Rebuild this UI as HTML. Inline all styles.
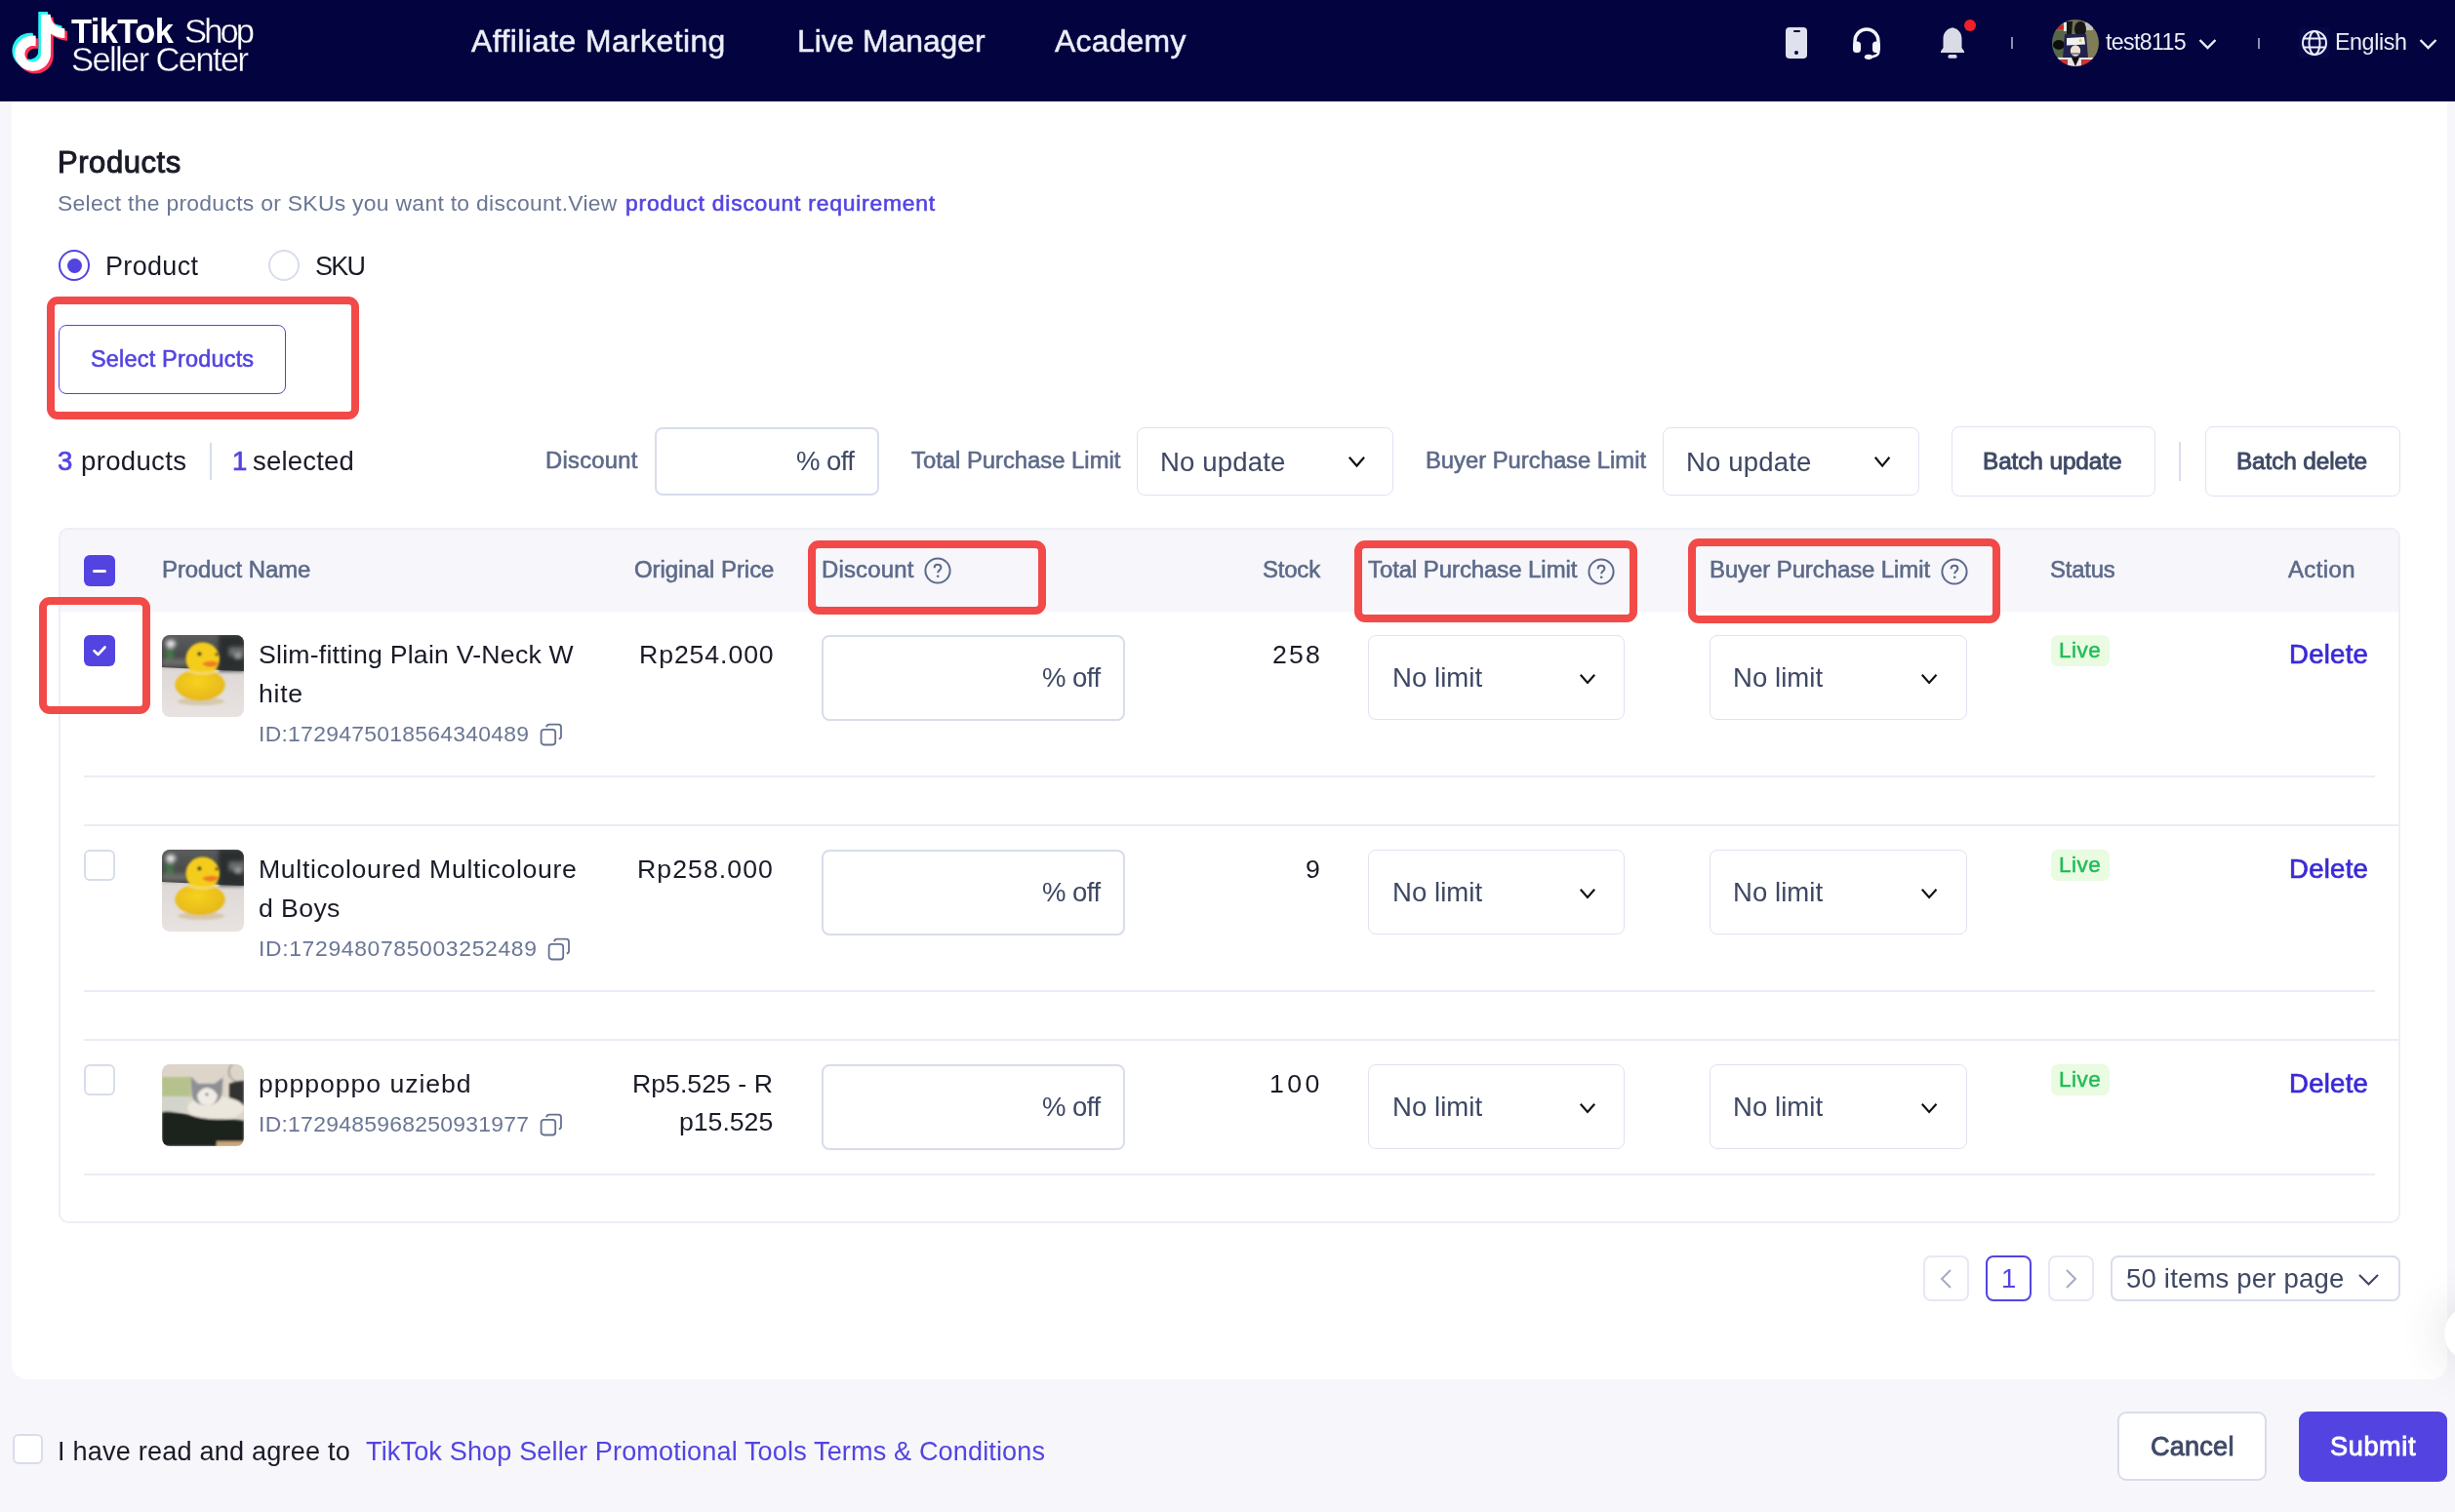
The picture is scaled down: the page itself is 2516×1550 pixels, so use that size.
<!DOCTYPE html><html><head><meta charset="utf-8"><style>
html,body{margin:0;padding:0;width:2516px;height:1550px;overflow:hidden;background:#f7f7fb}
body{position:relative;font-family:"Liberation Sans",sans-serif}
.t{position:absolute;white-space:nowrap;font-family:"Liberation Sans",sans-serif;will-change:transform}
</style></head><body>
<div style="position:absolute;left:0.0px;top:0.0px;width:2516.0px;height:1550.0px;background:#f7f7fb;"></div>
<div style="position:absolute;left:12.0px;top:0.0px;width:2496.0px;height:1414.0px;background:#fff;border-radius:0 0 16px 16px;"></div>
<div style="position:absolute;left:2505px;top:1339px;width:56px;height:56px;border-radius:50%;background:#fff;box-shadow:0 0 40px 10px rgba(60,60,90,0.10);"></div>
<div style="position:absolute;left:0.0px;top:0.0px;width:2516.0px;height:104.0px;background:#03033f;"></div>
<svg style="position:absolute;left:0px;top:0px" width="90" height="90" viewBox="0 0 90 90">
<g transform="translate(8.6,12) scale(2.45,2.42)"><path d="M12.525.02c1.31-.02 2.61-.01 3.91-.02.08 1.53.63 3.09 1.75 4.17 1.12 1.11 2.7 1.62 4.24 1.79v4.03c-1.44-.05-2.89-.35-4.2-.97-.57-.26-1.1-.59-1.62-.93-.01 2.92.01 5.84-.02 8.75-.08 1.4-.54 2.79-1.35 3.94-1.31 1.92-3.58 3.17-5.91 3.21-1.43.08-2.86-.31-4.08-1.03-2.02-1.19-3.44-3.37-3.65-5.71-.02-.5-.03-1-.01-1.49.18-1.9 1.12-3.72 2.58-4.96 1.66-1.44 3.98-2.13 6.15-1.72.02 1.48-.04 2.96-.04 4.44-.99-.32-2.15-.23-3.02.37-.63.41-1.11 1.04-1.36 1.75-.21.51-.15 1.07-.14 1.61.24 1.64 1.82 3.02 3.5 2.87 1.12-.01 2.19-.66 2.77-1.61.19-.33.4-.67.41-1.06.1-1.79.06-3.57.07-5.36.01-4.03-.01-8.05.02-12.07z" fill="#25f4ee"/></g>
<g transform="translate(14.1,17.5) scale(2.45,2.42)"><path d="M12.525.02c1.31-.02 2.61-.01 3.91-.02.08 1.53.63 3.09 1.75 4.17 1.12 1.11 2.7 1.62 4.24 1.79v4.03c-1.44-.05-2.89-.35-4.2-.97-.57-.26-1.1-.59-1.62-.93-.01 2.92.01 5.84-.02 8.75-.08 1.4-.54 2.79-1.35 3.94-1.31 1.92-3.58 3.17-5.91 3.21-1.43.08-2.86-.31-4.08-1.03-2.02-1.19-3.44-3.37-3.65-5.71-.02-.5-.03-1-.01-1.49.18-1.9 1.12-3.72 2.58-4.96 1.66-1.44 3.98-2.13 6.15-1.72.02 1.48-.04 2.96-.04 4.44-.99-.32-2.15-.23-3.02.37-.63.41-1.11 1.04-1.36 1.75-.21.51-.15 1.07-.14 1.61.24 1.64 1.82 3.02 3.5 2.87 1.12-.01 2.19-.66 2.77-1.61.19-.33.4-.67.41-1.06.1-1.79.06-3.57.07-5.36.01-4.03-.01-8.05.02-12.07z" fill="#fe2c55"/></g>
<g transform="translate(11.4,14.8) scale(2.45,2.42)"><path d="M12.525.02c1.31-.02 2.61-.01 3.91-.02.08 1.53.63 3.09 1.75 4.17 1.12 1.11 2.7 1.62 4.24 1.79v4.03c-1.44-.05-2.89-.35-4.2-.97-.57-.26-1.1-.59-1.62-.93-.01 2.92.01 5.84-.02 8.75-.08 1.4-.54 2.79-1.35 3.94-1.31 1.92-3.58 3.17-5.91 3.21-1.43.08-2.86-.31-4.08-1.03-2.02-1.19-3.44-3.37-3.65-5.71-.02-.5-.03-1-.01-1.49.18-1.9 1.12-3.72 2.58-4.96 1.66-1.44 3.98-2.13 6.15-1.72.02 1.48-.04 2.96-.04 4.44-.99-.32-2.15-.23-3.02.37-.63.41-1.11 1.04-1.36 1.75-.21.51-.15 1.07-.14 1.61.24 1.64 1.82 3.02 3.5 2.87 1.12-.01 2.19-.66 2.77-1.61.19-.33.4-.67.41-1.06.1-1.79.06-3.57.07-5.36.01-4.03-.01-8.05.02-12.07z" fill="#fff"/></g>
</svg>
<div class="t" style="left:73.30px;top:15.18px;font-size:34.49px;line-height:34.49px;letter-spacing:-0.627px;color:#fff;font-weight:700;">TikTok</div>
<div class="t" style="left:188.80px;top:15.18px;font-size:34.49px;line-height:34.49px;letter-spacing:-2.847px;color:#fff;font-weight:400;-webkit-text-stroke:0.35px #03033f;">Shop</div>
<div class="t" style="left:73.30px;top:44.48px;font-size:34.49px;line-height:34.49px;letter-spacing:-1.605px;color:#fff;font-weight:400;-webkit-text-stroke:0.35px #03033f;">Seller Center</div>
<div class="t" style="left:483.10px;top:26.60px;font-size:31.88px;line-height:31.88px;letter-spacing:0.420px;color:#eceef8;font-weight:400;-webkit-text-stroke:0.5px #eceef8;">Affiliate Marketing</div>
<div class="t" style="left:817.10px;top:26.80px;font-size:31.88px;line-height:31.88px;letter-spacing:-0.056px;color:#eceef8;font-weight:400;-webkit-text-stroke:0.5px #eceef8;">Live Manager</div>
<div class="t" style="left:1081.10px;top:26.80px;font-size:31.88px;line-height:31.88px;letter-spacing:0.241px;color:#eceef8;font-weight:400;-webkit-text-stroke:0.5px #eceef8;">Academy</div>
<div style="position:absolute;left:1830px;top:28px;width:22px;height:32px;border-radius:4px;background:#dfe2ee;"></div>
<div style="position:absolute;left:1838.0px;top:31.0px;width:6.5px;height:2.0px;background:#03033f;border-radius:1px;"></div>
<div style="position:absolute;left:1839px;top:52px;width:4px;height:4px;border-radius:50%;background:#03033f;"></div>
<svg style="position:absolute;left:1896px;top:27px" width="34" height="36" viewBox="0 0 34 36">
<path d="M5 19 V15 A12 12 0 0 1 29 15 V19" fill="none" stroke="#f3f4fa" stroke-width="3.4"/>
<rect x="3" y="15.5" width="8" height="11.5" rx="3.5" fill="#f3f4fa"/>
<rect x="23" y="15.5" width="8" height="11.5" rx="3.5" fill="#f3f4fa"/>
<path d="M29.5 26 C29 29.5 26 31 21 31.5" fill="none" stroke="#f3f4fa" stroke-width="2.6"/>
<ellipse cx="19" cy="31.3" rx="4.2" ry="2.6" fill="#f3f4fa"/>
</svg>
<svg style="position:absolute;left:1986px;top:27px" width="30" height="34" viewBox="0 0 30 34">
<path d="M15 1.2 C8.5 2.5 5.5 7 5.5 13 V22 L3 25.5 V27 H27 V25.5 L24.5 22 V13 C24.5 7 21.5 2.5 15 1.2Z" fill="#d9dbe6"/>
<rect x="10.5" y="29" width="9" height="3.8" rx="1.5" fill="#d9dbe6"/>
</svg>
<div style="position:absolute;left:2012.8px;top:19.8px;width:12.5px;height:12.5px;border-radius:50%;background:#f0202a;"></div>
<div style="position:absolute;left:2061.0px;top:38.0px;width:2.0px;height:12.0px;background:#8c90ab;"></div>
<svg style="position:absolute;left:2103px;top:20px" width="48" height="48" viewBox="0 0 48 48">
<defs><clipPath id="av"><circle cx="24" cy="24" r="24"/></clipPath><filter id="avb"><feGaussianBlur stdDeviation="0.7"/></filter></defs>
<g clip-path="url(#av)"><g filter="url(#avb)">
<rect width="48" height="48" fill="#6f704f"/>
<rect x="0" y="12" width="14" height="26" fill="#56664a"/>
<rect x="34" y="10" width="14" height="30" fill="#807b58"/>
<rect x="5" y="6" width="7" height="4" fill="#c8262a"/>
<rect x="12" y="3" width="4" height="9" fill="#e6e6e6"/>
<rect x="34" y="3" width="8" height="8" fill="#d8d8d8" opacity="0.8"/>
<path d="M15 2 L21 2 L20 16 L15 16Z" fill="#151515"/>
<ellipse cx="29" cy="10" rx="6" ry="8" fill="#161616"/>
<ellipse cx="7" cy="26" rx="6" ry="5" fill="#111"/>
<path d="M13 15 L35 15 L37 40 L11 40Z" fill="#23214d"/>
<path d="M15 19 L33 18 L34 25.5 L15 26.5Z" fill="#f1f1f1"/>
<circle cx="29" cy="21.5" r="1.5" fill="#e3cf2a"/>
<ellipse cx="24" cy="32" rx="5.2" ry="5.8" fill="#eddfd2"/>
<rect x="20" y="34" width="8" height="2" fill="#8a8a8a"/>
<rect x="0" y="39" width="48" height="10" fill="#e9e2e2"/>
<rect x="4" y="41" width="12" height="8" fill="#c93535"/>
<rect x="30" y="41" width="14" height="8" fill="#c93535"/>
<path d="M20 39 L24 48 L28 39Z" fill="#111"/>
</g></g></svg>
<div class="t" style="left:2158.20px;top:31.89px;font-size:23.19px;line-height:23.19px;letter-spacing:-0.655px;color:#eceef8;font-weight:400;">test8115</div>
<svg style="position:absolute;left:2253px;top:39px" width="19" height="12" viewBox="0 0 19 12"><path d="M1.5 2 L9.5 10 L17.5 2" fill="none" stroke="#eceef8" stroke-width="2.4"/></svg>
<div style="position:absolute;left:2314.0px;top:38.5px;width:2.0px;height:11.5px;background:#8c90ab;"></div>
<div style="position:absolute;left:2356.0px;top:28.0px;width:31.0px;height:31.0px;background:#07074a;border-radius:2px;"></div>
<svg style="position:absolute;left:2357px;top:29px" width="30" height="30" viewBox="0 0 30 30">
<g fill="none" stroke="#eceef8" stroke-width="2">
<circle cx="15" cy="15" r="12"/>
<ellipse cx="15" cy="15" rx="5.5" ry="12"/>
<line x1="3" y1="10.5" x2="27" y2="10.5"/>
<line x1="3" y1="19.5" x2="27" y2="19.5"/>
</g></svg>
<div class="t" style="left:2392.50px;top:31.89px;font-size:23.19px;line-height:23.19px;letter-spacing:-0.376px;color:#eceef8;font-weight:400;">English</div>
<svg style="position:absolute;left:2479px;top:39px" width="19" height="12" viewBox="0 0 19 12"><path d="M1.5 2 L9.5 10 L17.5 2" fill="none" stroke="#eceef8" stroke-width="2.4"/></svg>
<div class="t" style="left:59.20px;top:150.84px;font-size:31.01px;line-height:31.01px;letter-spacing:0.550px;color:#191b27;font-weight:400;-webkit-text-stroke:1.0px #191b27;">Products</div>
<div class="t" style="left:59.20px;top:196.84px;font-size:22.90px;line-height:22.90px;letter-spacing:0.293px;color:#6a7694;font-weight:400;">Select the products or SKUs you want to discount.View</div>
<div class="t" style="left:641.10px;top:196.84px;font-size:22.90px;line-height:22.90px;letter-spacing:0.765px;color:#5344e2;font-weight:400;-webkit-text-stroke:0.6px #5344e2;">product discount requirement</div>
<div style="position:absolute;left:60px;top:256px;width:28px;height:28px;border:2px solid #5344e2;border-radius:50%;"></div>
<div style="position:absolute;left:68.5px;top:264.5px;width:15px;height:15px;border-radius:50%;background:#5344e2;"></div>
<div class="t" style="left:107.80px;top:260.19px;font-size:26.96px;line-height:26.96px;letter-spacing:0.356px;color:#191b27;font-weight:400;">Product</div>
<div style="position:absolute;left:275px;top:256px;width:28px;height:28px;border:2px solid #d8ddec;border-radius:50%;"></div>
<div class="t" style="left:322.80px;top:260.19px;font-size:26.96px;line-height:26.96px;letter-spacing:-1.698px;color:#191b27;font-weight:400;">SKU</div>
<div style="position:absolute;left:60px;top:333.3px;width:231px;height:68.5px;border:1.5px solid #5344e2;border-radius:8px;"></div>
<div class="t" style="left:92.60px;top:356.74px;font-size:23.48px;line-height:23.48px;letter-spacing:0.195px;color:#5344e2;font-weight:400;-webkit-text-stroke:0.6px #5344e2;">Select Products</div>
<div class="t" style="left:59.20px;top:459.09px;font-size:27.54px;line-height:27.54px;letter-spacing:0.000px;color:#5344e2;font-weight:400;-webkit-text-stroke:0.7px #5344e2;">3</div>
<div class="t" style="left:82.60px;top:459.09px;font-size:27.54px;line-height:27.54px;letter-spacing:0.328px;color:#191b27;font-weight:400;">products</div>
<div style="position:absolute;left:215.0px;top:453.5px;width:2.0px;height:38.7px;background:#d8dcef;"></div>
<div class="t" style="left:237.80px;top:459.09px;font-size:27.54px;line-height:27.54px;letter-spacing:0.000px;color:#5344e2;font-weight:400;-webkit-text-stroke:0.7px #5344e2;">1</div>
<div class="t" style="left:258.80px;top:459.09px;font-size:27.54px;line-height:27.54px;letter-spacing:0.175px;color:#191b27;font-weight:400;">selected</div>
<div class="t" style="left:559.00px;top:460.30px;font-size:23.77px;line-height:23.77px;letter-spacing:0.277px;color:#5d6a89;font-weight:400;-webkit-text-stroke:0.6px #5d6a89;">Discount</div>
<div style="position:absolute;left:670.8px;top:437.6px;width:226px;height:66px;border:2px solid #d8ddec;border-radius:8px;"></div>
<div class="t" style="left:816.10px;top:458.89px;font-size:27.54px;line-height:27.54px;letter-spacing:-0.567px;color:#3e4864;font-weight:400;">% off</div>
<div class="t" style="left:934.00px;top:460.30px;font-size:23.77px;line-height:23.77px;letter-spacing:0.019px;color:#5d6a89;font-weight:400;-webkit-text-stroke:0.6px #5d6a89;">Total Purchase Limit</div>
<div style="position:absolute;left:1165.2px;top:437.5px;width:261.0px;height:68.7px;border:1px solid #dfe3f1;border-radius:8px;background:#fff"></div>
<div class="t" style="left:1189.40px;top:460.09px;font-size:27.54px;line-height:27.54px;letter-spacing:0.165px;color:#3e4864;font-weight:400;">No update</div>
<svg style="position:absolute;left:1379.6px;top:466.0px" width="20.9" height="14.4" viewBox="0 0 20.9 14.4"><path d="M2.8 2.8 L10.5 11.6 L18.1 2.8" fill="none" stroke="#111" stroke-width="2.2"/></svg>
<div class="t" style="left:1460.50px;top:460.30px;font-size:23.77px;line-height:23.77px;letter-spacing:0.010px;color:#5d6a89;font-weight:400;-webkit-text-stroke:0.6px #5d6a89;">Buyer Purchase Limit</div>
<div style="position:absolute;left:1704.4px;top:437.5px;width:261.0px;height:68.7px;border:1px solid #dfe3f1;border-radius:8px;background:#fff"></div>
<div class="t" style="left:1727.80px;top:460.09px;font-size:27.54px;line-height:27.54px;letter-spacing:0.165px;color:#3e4864;font-weight:400;">No update</div>
<svg style="position:absolute;left:1918.8px;top:466.0px" width="20.2" height="14.4" viewBox="0 0 20.2 14.4"><path d="M2.8 2.8 L10.1 11.6 L17.4 2.8" fill="none" stroke="#111" stroke-width="2.2"/></svg>
<div style="position:absolute;left:2000px;top:437px;width:206.6px;height:69.6px;border:1px solid #dfe3f1;border-radius:8px;"></div>
<div class="t" style="left:2032.30px;top:460.50px;font-size:24.35px;line-height:24.35px;letter-spacing:-0.094px;color:#3f4a66;font-weight:400;-webkit-text-stroke:0.9px #3f4a66;">Batch update</div>
<div style="position:absolute;left:2233.0px;top:453.0px;width:2.0px;height:39.7px;background:#d8dcef;"></div>
<div style="position:absolute;left:2259.5px;top:437px;width:198.2px;height:69.6px;border:1px solid #dfe3f1;border-radius:8px;"></div>
<div class="t" style="left:2291.50px;top:460.50px;font-size:24.35px;line-height:24.35px;letter-spacing:-0.116px;color:#3f4a66;font-weight:400;-webkit-text-stroke:0.9px #3f4a66;">Batch delete</div>
<div style="position:absolute;left:60px;top:541px;width:2396px;height:709px;border:2px solid #eceff6;border-radius:10px;overflow:hidden"><div style="position:absolute;left:0;top:0;width:100%;height:84px;background:#f6f6fb"></div></div>
<div style="position:absolute;left:86px;top:569px;width:32px;height:32px;border-radius:6px;background:#5344e2"></div>
<div style="position:absolute;left:95.0px;top:583.5px;width:14.0px;height:3.0px;background:#fff;border-radius:1.5px;"></div>
<div class="t" style="left:165.80px;top:572.47px;font-size:23.91px;line-height:23.91px;letter-spacing:-0.037px;color:#5d6a89;font-weight:400;-webkit-text-stroke:0.6px #5d6a89;">Product Name</div>
<div class="t" style="left:649.50px;top:572.47px;font-size:23.91px;line-height:23.91px;letter-spacing:-0.006px;color:#5d6a89;font-weight:400;-webkit-text-stroke:0.6px #5d6a89;">Original Price</div>
<div class="t" style="left:841.70px;top:572.47px;font-size:23.91px;line-height:23.91px;letter-spacing:0.197px;color:#5d6a89;font-weight:400;-webkit-text-stroke:0.6px #5d6a89;">Discount</div>
<div class="t" style="left:1293.80px;top:572.47px;font-size:23.91px;line-height:23.91px;letter-spacing:-0.176px;color:#5d6a89;font-weight:400;-webkit-text-stroke:0.6px #5d6a89;">Stock</div>
<div class="t" style="left:1401.80px;top:572.47px;font-size:23.91px;line-height:23.91px;letter-spacing:-0.044px;color:#5d6a89;font-weight:400;-webkit-text-stroke:0.6px #5d6a89;">Total Purchase Limit</div>
<div class="t" style="left:1751.60px;top:572.47px;font-size:23.91px;line-height:23.91px;letter-spacing:-0.058px;color:#5d6a89;font-weight:400;-webkit-text-stroke:0.6px #5d6a89;">Buyer Purchase Limit</div>
<div class="t" style="left:2101.40px;top:572.47px;font-size:23.91px;line-height:23.91px;letter-spacing:-0.219px;color:#5d6a89;font-weight:400;-webkit-text-stroke:0.6px #5d6a89;">Status</div>
<div class="t" style="left:2345.20px;top:572.47px;font-size:23.91px;line-height:23.91px;letter-spacing:0.404px;color:#5d6a89;font-weight:400;-webkit-text-stroke:0.6px #5d6a89;">Action</div>
<svg style="position:absolute;left:947.0px;top:571.0px" width="28" height="28" viewBox="0 0 28 28"><circle cx="14" cy="14" r="12.6" fill="none" stroke="#5d6a89" stroke-width="2"/><path d="M10.6 11.2 C10.6 8.9 12.1 7.8 14 7.8 C15.9 7.8 17.4 9 17.4 10.9 C17.4 13.3 14.2 13.5 14.2 16.2" fill="none" stroke="#5d6a89" stroke-width="2"/><circle cx="14.2" cy="19.8" r="1.3" fill="#5d6a89"/></svg>
<svg style="position:absolute;left:1627.3px;top:572.2px" width="28" height="28" viewBox="0 0 28 28"><circle cx="14" cy="14" r="12.6" fill="none" stroke="#5d6a89" stroke-width="2"/><path d="M10.6 11.2 C10.6 8.9 12.1 7.8 14 7.8 C15.9 7.8 17.4 9 17.4 10.9 C17.4 13.3 14.2 13.5 14.2 16.2" fill="none" stroke="#5d6a89" stroke-width="2"/><circle cx="14.2" cy="19.8" r="1.3" fill="#5d6a89"/></svg>
<svg style="position:absolute;left:1989.4px;top:572.1px" width="28" height="28" viewBox="0 0 28 28"><circle cx="14" cy="14" r="12.6" fill="none" stroke="#5d6a89" stroke-width="2"/><path d="M10.6 11.2 C10.6 8.9 12.1 7.8 14 7.8 C15.9 7.8 17.4 9 17.4 10.9 C17.4 13.3 14.2 13.5 14.2 16.2" fill="none" stroke="#5d6a89" stroke-width="2"/><circle cx="14.2" cy="19.8" r="1.3" fill="#5d6a89"/></svg>
<div style="position:absolute;left:86px;top:651px;width:32px;height:32px;border-radius:6px;background:#5344e2"></div>
<svg style="position:absolute;left:86px;top:651px" width="32" height="32" viewBox="0 0 32 32"><path d="M10.5 16.2 L14.5 20 L21.5 12.5" fill="none" stroke="#fff" stroke-width="2.6" stroke-linecap="round" stroke-linejoin="round"/></svg>
<div style="position:absolute;left:166px;top:651px;width:84px;height:84px;border-radius:8px;overflow:hidden"><svg width="84" height="84" viewBox="0 0 84 84"><defs><filter id="IDb" x="-10%" y="-10%" width="120%" height="120%"><feGaussianBlur stdDeviation="0.9"/></filter><filter id="IDb2"><feGaussianBlur stdDeviation="2"/></filter>
<linearGradient id="IDt" x1="0" y1="0" x2="0" y2="1"><stop offset="0" stop-color="#d6d2d0"/><stop offset="1" stop-color="#e8e2e0"/></linearGradient>
<linearGradient id="IDk" x1="0" y1="0" x2="0" y2="1"><stop offset="0" stop-color="#5b5c5e"/><stop offset="1" stop-color="#3c3d3e"/></linearGradient>
<radialGradient id="IDy" cx="0.45" cy="0.4" r="0.7"><stop offset="0" stop-color="#f7d21e"/><stop offset="1" stop-color="#e3b318"/></radialGradient></defs>
<rect width="84" height="84" fill="url(#IDt)"/>
<path d="M0 0 H84 V37 L60 36 L0 33Z" fill="url(#IDk)"/>
<g filter="url(#IDb2)">
<ellipse cx="9" cy="9" rx="5" ry="4" fill="#e8e8e8"/>
<ellipse cx="8" cy="19" rx="4" ry="6" fill="#3f7a45"/>
<rect x="0" y="24" width="26" height="8" fill="#6a6c68"/>
<rect x="58" y="0" width="26" height="37" fill="#2c2d2f"/>
<rect x="69" y="13" width="15" height="8" fill="#6e7072"/>
<ellipse cx="78" cy="21.5" rx="3" ry="1.2" fill="#f0f0f0"/>
</g>
<g filter="url(#IDb)">
<ellipse cx="40" cy="68" rx="24" ry="4" fill="#c9b27a" opacity="0.5"/>
<ellipse cx="39" cy="51" rx="25.7" ry="16" fill="url(#IDy)"/>
<ellipse cx="41.7" cy="24.5" rx="17.3" ry="17" fill="#f4cd1c"/>
<path d="M41 29.5 C45 26 54 26 58 28.5 C56 33 48 35 41 29.5Z" fill="#f07a22"/>
<circle cx="38.4" cy="19.4" r="2.1" fill="#3a2a12"/>
<circle cx="56" cy="19.8" r="1.6" fill="#3a2a12"/>
<path d="M27 37 C35 40 48 41 58 36" fill="none" stroke="#f3e6b0" stroke-width="2" opacity="0.6"/>
</g>
</svg></div>
<div class="t" style="left:265.40px;top:657.63px;font-size:26.67px;line-height:26.67px;letter-spacing:0.223px;color:#191b27;font-weight:400;">Slim-fitting Plain V-Neck W</div>
<div class="t" style="left:265.40px;top:697.63px;font-size:26.67px;line-height:26.67px;letter-spacing:0.689px;color:#191b27;font-weight:400;">hite</div>
<div class="t" style="left:265.40px;top:740.84px;font-size:22.90px;line-height:22.90px;letter-spacing:0.284px;color:#6a7694;font-weight:400;">ID:1729475018564340489</div>
<svg style="position:absolute;left:553.2px;top:741.2px" width="24" height="24" viewBox="0 0 24 24"><g fill="none" stroke="#647190" stroke-width="1.8"><rect x="1.6" y="6.9" width="14.6" height="15.6" rx="3"/><path d="M7 4.2 C7.4 2.6 8.4 1.7 10 1.7 H19.3 C20.9 1.7 22 2.8 22 4.4 V13.8 C22 15.4 21.2 16.3 19.8 16.5"/></g></svg>
<div class="t" style="left:654.50px;top:657.63px;font-size:26.67px;line-height:26.67px;letter-spacing:0.908px;color:#191b27;font-weight:400;">Rp254.000</div>
<div style="position:absolute;left:842.3px;top:651px;width:307px;height:83.5px;border:2px solid #d8ddec;border-radius:8px;"></div>
<div class="t" style="left:1068.00px;top:681.19px;font-size:27.54px;line-height:27.54px;letter-spacing:-0.542px;color:#3e4864;font-weight:400;">% off</div>
<div class="t" style="left:1303.80px;top:657.83px;font-size:26.67px;line-height:26.67px;letter-spacing:2.183px;color:#191b27;font-weight:400;">258</div>
<div style="position:absolute;left:1402.3px;top:651.2px;width:261.2px;height:85.3px;border:1px solid #dfe3f1;border-radius:8px;background:#fff"></div>
<div class="t" style="left:1426.60px;top:681.09px;font-size:27.54px;line-height:27.54px;letter-spacing:0.052px;color:#3e4864;font-weight:400;">No limit</div>
<svg style="position:absolute;left:1617.0px;top:688.8px" width="20.0" height="13.7" viewBox="0 0 20.0 13.7"><path d="M2.8 2.8 L10.0 10.9 L17.2 2.8" fill="none" stroke="#111" stroke-width="2.2"/></svg>
<div style="position:absolute;left:1752.4px;top:651.2px;width:261.2px;height:85.3px;border:1px solid #dfe3f1;border-radius:8px;background:#fff"></div>
<div class="t" style="left:1776.40px;top:681.09px;font-size:27.54px;line-height:27.54px;letter-spacing:0.052px;color:#3e4864;font-weight:400;">No limit</div>
<svg style="position:absolute;left:1966.7px;top:688.8px" width="20.3" height="13.7" viewBox="0 0 20.3 13.7"><path d="M2.8 2.8 L10.1 10.9 L17.5 2.8" fill="none" stroke="#111" stroke-width="2.2"/></svg>
<div style="position:absolute;left:2101.8px;top:651px;width:60px;height:32px;border-radius:7px;background:#e9fbe0"></div>
<div class="t" style="left:2109.80px;top:655.78px;font-size:22.61px;line-height:22.61px;letter-spacing:0.438px;color:#20bb5a;font-weight:400;-webkit-text-stroke:0.45px #20bb5a;">Live</div>
<div class="t" style="left:2346.10px;top:657.39px;font-size:27.54px;line-height:27.54px;letter-spacing:0.264px;color:#3a2ad6;font-weight:400;-webkit-text-stroke:0.7px #3a2ad6;">Delete</div>
<div style="position:absolute;left:86.0px;top:795.0px;width:2348.0px;height:2.0px;background:#e9edf5;"></div>
<div style="position:absolute;left:86.0px;top:845.0px;width:2373.0px;height:2.0px;background:#e9edf5;"></div>
<div style="position:absolute;left:86px;top:871px;width:28px;height:28px;border-radius:6px;border:2px solid #d8ddec;background:#fff"></div>
<div style="position:absolute;left:166px;top:871px;width:84px;height:84px;border-radius:8px;overflow:hidden"><svg width="84" height="84" viewBox="0 0 84 84"><defs><filter id="ID2b" x="-10%" y="-10%" width="120%" height="120%"><feGaussianBlur stdDeviation="0.9"/></filter><filter id="ID2b2"><feGaussianBlur stdDeviation="2"/></filter>
<linearGradient id="ID2t" x1="0" y1="0" x2="0" y2="1"><stop offset="0" stop-color="#d6d2d0"/><stop offset="1" stop-color="#e8e2e0"/></linearGradient>
<linearGradient id="ID2k" x1="0" y1="0" x2="0" y2="1"><stop offset="0" stop-color="#5b5c5e"/><stop offset="1" stop-color="#3c3d3e"/></linearGradient>
<radialGradient id="ID2y" cx="0.45" cy="0.4" r="0.7"><stop offset="0" stop-color="#f7d21e"/><stop offset="1" stop-color="#e3b318"/></radialGradient></defs>
<rect width="84" height="84" fill="url(#ID2t)"/>
<path d="M0 0 H84 V37 L60 36 L0 33Z" fill="url(#ID2k)"/>
<g filter="url(#ID2b2)">
<ellipse cx="9" cy="9" rx="5" ry="4" fill="#e8e8e8"/>
<ellipse cx="8" cy="19" rx="4" ry="6" fill="#3f7a45"/>
<rect x="0" y="24" width="26" height="8" fill="#6a6c68"/>
<rect x="58" y="0" width="26" height="37" fill="#2c2d2f"/>
<rect x="69" y="13" width="15" height="8" fill="#6e7072"/>
<ellipse cx="78" cy="21.5" rx="3" ry="1.2" fill="#f0f0f0"/>
</g>
<g filter="url(#ID2b)">
<ellipse cx="40" cy="68" rx="24" ry="4" fill="#c9b27a" opacity="0.5"/>
<ellipse cx="39" cy="51" rx="25.7" ry="16" fill="url(#ID2y)"/>
<ellipse cx="41.7" cy="24.5" rx="17.3" ry="17" fill="#f4cd1c"/>
<path d="M41 29.5 C45 26 54 26 58 28.5 C56 33 48 35 41 29.5Z" fill="#f07a22"/>
<circle cx="38.4" cy="19.4" r="2.1" fill="#3a2a12"/>
<circle cx="56" cy="19.8" r="1.6" fill="#3a2a12"/>
<path d="M27 37 C35 40 48 41 58 36" fill="none" stroke="#f3e6b0" stroke-width="2" opacity="0.6"/>
</g>
</svg></div>
<div class="t" style="left:265.40px;top:877.63px;font-size:26.67px;line-height:26.67px;letter-spacing:0.651px;color:#191b27;font-weight:400;">Multicoloured Multicoloure</div>
<div class="t" style="left:265.40px;top:917.63px;font-size:26.67px;line-height:26.67px;letter-spacing:0.387px;color:#191b27;font-weight:400;">d Boys</div>
<div class="t" style="left:265.40px;top:960.84px;font-size:22.90px;line-height:22.90px;letter-spacing:0.656px;color:#6a7694;font-weight:400;">ID:1729480785003252489</div>
<svg style="position:absolute;left:561.0px;top:961.2px" width="24" height="24" viewBox="0 0 24 24"><g fill="none" stroke="#647190" stroke-width="1.8"><rect x="1.6" y="6.9" width="14.6" height="15.6" rx="3"/><path d="M7 4.2 C7.4 2.6 8.4 1.7 10 1.7 H19.3 C20.9 1.7 22 2.8 22 4.4 V13.8 C22 15.4 21.2 16.3 19.8 16.5"/></g></svg>
<div class="t" style="left:653.30px;top:877.63px;font-size:26.67px;line-height:26.67px;letter-spacing:1.058px;color:#191b27;font-weight:400;">Rp258.000</div>
<div style="position:absolute;left:842.3px;top:871px;width:307px;height:83.5px;border:2px solid #d8ddec;border-radius:8px;"></div>
<div class="t" style="left:1068.00px;top:901.19px;font-size:27.54px;line-height:27.54px;letter-spacing:-0.542px;color:#3e4864;font-weight:400;">% off</div>
<div class="t" style="left:1337.90px;top:877.83px;font-size:26.67px;line-height:26.67px;letter-spacing:0.000px;color:#191b27;font-weight:400;">9</div>
<div style="position:absolute;left:1402.3px;top:871.2px;width:261.2px;height:85.3px;border:1px solid #dfe3f1;border-radius:8px;background:#fff"></div>
<div class="t" style="left:1426.60px;top:901.09px;font-size:27.54px;line-height:27.54px;letter-spacing:0.052px;color:#3e4864;font-weight:400;">No limit</div>
<svg style="position:absolute;left:1617.0px;top:908.8px" width="20.0" height="13.7" viewBox="0 0 20.0 13.7"><path d="M2.8 2.8 L10.0 10.9 L17.2 2.8" fill="none" stroke="#111" stroke-width="2.2"/></svg>
<div style="position:absolute;left:1752.4px;top:871.2px;width:261.2px;height:85.3px;border:1px solid #dfe3f1;border-radius:8px;background:#fff"></div>
<div class="t" style="left:1776.40px;top:901.09px;font-size:27.54px;line-height:27.54px;letter-spacing:0.052px;color:#3e4864;font-weight:400;">No limit</div>
<svg style="position:absolute;left:1966.7px;top:908.8px" width="20.3" height="13.7" viewBox="0 0 20.3 13.7"><path d="M2.8 2.8 L10.1 10.9 L17.5 2.8" fill="none" stroke="#111" stroke-width="2.2"/></svg>
<div style="position:absolute;left:2101.8px;top:871px;width:60px;height:32px;border-radius:7px;background:#e9fbe0"></div>
<div class="t" style="left:2109.80px;top:875.78px;font-size:22.61px;line-height:22.61px;letter-spacing:0.438px;color:#20bb5a;font-weight:400;-webkit-text-stroke:0.45px #20bb5a;">Live</div>
<div class="t" style="left:2346.10px;top:877.39px;font-size:27.54px;line-height:27.54px;letter-spacing:0.264px;color:#3a2ad6;font-weight:400;-webkit-text-stroke:0.7px #3a2ad6;">Delete</div>
<div style="position:absolute;left:86.0px;top:1015.0px;width:2348.0px;height:2.0px;background:#e9edf5;"></div>
<div style="position:absolute;left:86.0px;top:1065.0px;width:2373.0px;height:2.0px;background:#e9edf5;"></div>
<div style="position:absolute;left:86px;top:1091px;width:28px;height:28px;border-radius:6px;border:2px solid #d8ddec;background:#fff"></div>
<div style="position:absolute;left:166px;top:1091px;width:84px;height:84px;border-radius:8px;overflow:hidden"><svg width="84" height="84" viewBox="0 0 84 84"><defs><filter id="cb" x="-10%" y="-10%" width="120%" height="120%"><feGaussianBlur stdDeviation="1"/></filter></defs>
<rect width="84" height="84" fill="#ddd5c9"/>
<g filter="url(#cb)">
<rect x="0" y="13" width="29.5" height="20.5" fill="#b6c28d"/>
<rect x="0" y="33" width="27" height="16" fill="#d3d5cd"/>
<path d="M69 20 C74 18 80 17 84 17 V42 H69Z" fill="#303232"/>
<path d="M72 0 C66 6 68 14 76 18" fill="none" stroke="#555" stroke-width="0.8"/>
<ellipse cx="55" cy="45" rx="29" ry="12" fill="#ece7dd"/>
<path d="M29.5 12.5 L37 20 L54 20 L62.5 13.5 L61.5 30 C60 38 54 42 46 42 C37 42 31 38 30.5 30Z" fill="#8e8f93"/>
<path d="M36 32 C38 27 42 24 46 24 C51 24 55 28 57 32 C56 39 52 42 46 42 C40 42 37 39 36 32Z" fill="#efebe5"/>
<circle cx="46" cy="31" r="1.3" fill="#3a2a2a"/>
<path d="M0 49 C12 47 26 52 40 55 C55 58 70 55 84 58 V84 H0Z" fill="#1f211f"/>
<rect x="56" y="79" width="28" height="5" fill="#c9a57a"/>
</g>
</svg></div>
<div class="t" style="left:265.40px;top:1097.63px;font-size:26.67px;line-height:26.67px;letter-spacing:0.938px;color:#191b27;font-weight:400;">ppppoppo uziebd</div>
<div class="t" style="left:265.40px;top:1140.84px;font-size:22.90px;line-height:22.90px;letter-spacing:0.284px;color:#6a7694;font-weight:400;">ID:1729485968250931977</div>
<svg style="position:absolute;left:553.2px;top:1141.2px" width="24" height="24" viewBox="0 0 24 24"><g fill="none" stroke="#647190" stroke-width="1.8"><rect x="1.6" y="6.9" width="14.6" height="15.6" rx="3"/><path d="M7 4.2 C7.4 2.6 8.4 1.7 10 1.7 H19.3 C20.9 1.7 22 2.8 22 4.4 V13.8 C22 15.4 21.2 16.3 19.8 16.5"/></g></svg>
<div class="t" style="left:648.40px;top:1097.63px;font-size:26.67px;line-height:26.67px;letter-spacing:0.017px;color:#191b27;font-weight:400;">Rp5.525 - R</div>
<div class="t" style="left:696.00px;top:1137.23px;font-size:26.67px;line-height:26.67px;letter-spacing:-0.017px;color:#191b27;font-weight:400;">p15.525</div>
<div style="position:absolute;left:842.3px;top:1091px;width:307px;height:83.5px;border:2px solid #d8ddec;border-radius:8px;"></div>
<div class="t" style="left:1068.00px;top:1121.19px;font-size:27.54px;line-height:27.54px;letter-spacing:-0.542px;color:#3e4864;font-weight:400;">% off</div>
<div class="t" style="left:1301.20px;top:1097.83px;font-size:26.67px;line-height:26.67px;letter-spacing:3.483px;color:#191b27;font-weight:400;">100</div>
<div style="position:absolute;left:1402.3px;top:1091.2px;width:261.2px;height:85.3px;border:1px solid #dfe3f1;border-radius:8px;background:#fff"></div>
<div class="t" style="left:1426.60px;top:1121.09px;font-size:27.54px;line-height:27.54px;letter-spacing:0.052px;color:#3e4864;font-weight:400;">No limit</div>
<svg style="position:absolute;left:1617.0px;top:1128.8px" width="20.0" height="13.7" viewBox="0 0 20.0 13.7"><path d="M2.8 2.8 L10.0 10.9 L17.2 2.8" fill="none" stroke="#111" stroke-width="2.2"/></svg>
<div style="position:absolute;left:1752.4px;top:1091.2px;width:261.2px;height:85.3px;border:1px solid #dfe3f1;border-radius:8px;background:#fff"></div>
<div class="t" style="left:1776.40px;top:1121.09px;font-size:27.54px;line-height:27.54px;letter-spacing:0.052px;color:#3e4864;font-weight:400;">No limit</div>
<svg style="position:absolute;left:1966.7px;top:1128.8px" width="20.3" height="13.7" viewBox="0 0 20.3 13.7"><path d="M2.8 2.8 L10.1 10.9 L17.5 2.8" fill="none" stroke="#111" stroke-width="2.2"/></svg>
<div style="position:absolute;left:2101.8px;top:1091px;width:60px;height:32px;border-radius:7px;background:#e9fbe0"></div>
<div class="t" style="left:2109.80px;top:1095.78px;font-size:22.61px;line-height:22.61px;letter-spacing:0.438px;color:#20bb5a;font-weight:400;-webkit-text-stroke:0.45px #20bb5a;">Live</div>
<div class="t" style="left:2346.10px;top:1097.39px;font-size:27.54px;line-height:27.54px;letter-spacing:0.264px;color:#3a2ad6;font-weight:400;-webkit-text-stroke:0.7px #3a2ad6;">Delete</div>
<div style="position:absolute;left:86.0px;top:1203.0px;width:2348.0px;height:2.0px;background:#e9edf5;"></div>
<div style="position:absolute;left:48.0px;top:304.0px;width:304.0px;height:110.0px;border:8px solid #f24a48;border-radius:11px;"></div>
<div style="position:absolute;left:40.2px;top:612.0px;width:97.5px;height:103.8px;border:8px solid #f24a48;border-radius:11px;"></div>
<div style="position:absolute;left:828.2px;top:554.0px;width:227.7px;height:59.6px;border:8px solid #f24a48;border-radius:11px;"></div>
<div style="position:absolute;left:1388.2px;top:554.0px;width:273.6px;height:67.6px;border:8px solid #f24a48;border-radius:11px;"></div>
<div style="position:absolute;left:1730.2px;top:552.2px;width:303.5px;height:71.3px;border:8px solid #f24a48;border-radius:11px;"></div>
<div style="position:absolute;left:1971.4px;top:1287.2px;width:43px;height:43px;border:2px solid #e6e9f3;border-radius:8px;"></div>
<svg style="position:absolute;left:1987px;top:1300px" width="15" height="22" viewBox="0 0 15 22"><path d="M12 2 L3 11 L12 20" fill="none" stroke="#a4acc4" stroke-width="2"/></svg>
<div style="position:absolute;left:2035.3px;top:1287.2px;width:42.5px;height:42.5px;border:2.5px solid #5344e2;border-radius:8px;"></div>
<div class="t" style="left:2050.80px;top:1297.49px;font-size:27.54px;line-height:27.54px;letter-spacing:0.000px;color:#5344e2;font-weight:400;">1</div>
<div style="position:absolute;left:2099.4px;top:1287.2px;width:43px;height:43px;border:2px solid #e6e9f3;border-radius:8px;"></div>
<svg style="position:absolute;left:2115px;top:1300px" width="15" height="22" viewBox="0 0 15 22"><path d="M3 2 L12 11 L3 20" fill="none" stroke="#a4acc4" stroke-width="2"/></svg>
<div style="position:absolute;left:2163.3px;top:1287.2px;width:292.3px;height:43px;border:2px solid #d8ddec;border-radius:8px;"></div>
<div class="t" style="left:2179.40px;top:1297.09px;font-size:27.54px;line-height:27.54px;letter-spacing:0.186px;color:#3e4864;font-weight:400;">50 items per page</div>
<svg style="position:absolute;left:2416px;top:1305px" width="23" height="14" viewBox="0 0 23 14"><path d="M2 2 L11.5 11.5 L21 2" fill="none" stroke="#3e4864" stroke-width="2.2"/></svg>
<div style="position:absolute;left:12.5px;top:1469.7px;width:27px;height:27px;border:2px solid #d8ddec;border-radius:6px;background:#fff"></div>
<div class="t" style="left:59.20px;top:1473.76px;font-size:27.10px;line-height:27.10px;letter-spacing:0.201px;color:#191b27;font-weight:400;">I have read and agree to</div>
<div class="t" style="left:374.70px;top:1473.76px;font-size:27.10px;line-height:27.10px;letter-spacing:0.127px;color:#5344e2;font-weight:400;">TikTok Shop Seller Promotional Tools Terms &amp; Conditions</div>
<div style="position:absolute;left:2170.4px;top:1447.4px;width:149px;height:67px;border:2px solid #d8ddec;border-radius:9px;background:#fff"></div>
<div class="t" style="left:2203.70px;top:1469.46px;font-size:27.10px;line-height:27.10px;letter-spacing:0.216px;color:#3f4a66;font-weight:400;-webkit-text-stroke:0.9px #3f4a66;">Cancel</div>
<div style="position:absolute;left:2356px;top:1447px;width:152px;height:72px;border-radius:9px;background:#5344e2"></div>
<div class="t" style="left:2387.80px;top:1469.46px;font-size:27.10px;line-height:27.10px;letter-spacing:0.623px;color:#fff;font-weight:400;-webkit-text-stroke:0.9px #fff;">Submit</div>
</body></html>
